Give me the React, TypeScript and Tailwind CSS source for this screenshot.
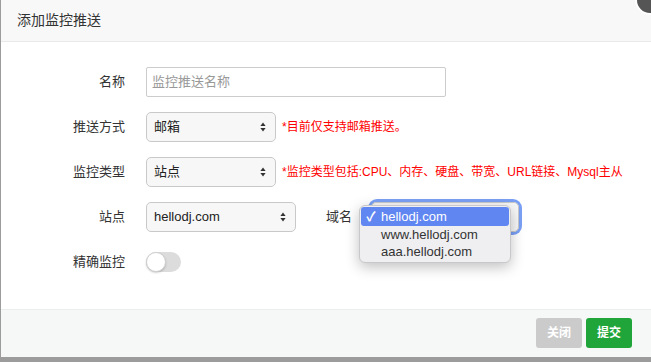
import React from "react";

const cjk = { fontFamily: '"Liberation Sans", "Noto Sans CJK SC", sans-serif' };

const Arrows = () => (
  <svg width="6" height="10" viewBox="0 0 6 10" className="shrink-0">
    <path d="M3 0.5 L5.6 4 H0.4 Z" fill="#333" />
    <path d="M3 9.5 L5.6 6 H0.4 Z" fill="#333" />
  </svg>
);

const Select = ({ value, width }: { value?: string; width: string }) => (
  <div
    className={`${width} h-[30px] flex items-center justify-between pl-[7px] pr-[9px] rounded-[5px] border border-[#c9c9c9] bg-[#f7f7f7] text-[13px] text-[#222]`}
  >
    <span>{value}</span>
    <Arrows />
  </div>
);

const Row = ({ label, children }: { label: string; children: React.ReactNode }) => (
  <div className="flex items-center h-[30px] mb-[15px]">
    <div className="w-[124px] text-right text-[13px] text-[#333]">{label}</div>
    <div className="ml-[21px] flex items-center">{children}</div>
  </div>
);

export default function App() {
  return (
    <div className="w-[651px] h-[362px] relative overflow-hidden bg-[#9c9c9c]" style={cjk}>
      <div className="absolute left-[1px] top-0 right-0 h-[357px] bg-white flex flex-col">
        {/* header */}
        <div className="h-[42px] shrink-0 bg-[#f8f8f8] border-b border-[#e9e9e9] flex items-center pl-[16px] text-[14px] text-[#333]">
          添加监控推送
        </div>

        {/* body */}
        <div className="flex-1 pt-[25px] whitespace-nowrap">
          <Row label="名称">
            <div className="w-[300px] h-[30px] border border-[#ccc] rounded-[2px] flex items-center pl-[5px] text-[13px] text-[#999]">
              监控推送名称
            </div>
          </Row>
          <Row label="推送方式">
            <Select value="邮箱" width="w-[130px]" />
            <span className="ml-[6px] text-[12px] text-[#f00]">*目前仅支持邮箱推送。</span>
          </Row>
          <Row label="监控类型">
            <Select value="站点" width="w-[130px]" />
            <span className="ml-[6px] text-[12px] text-[#f00]">
              *监控类型包括:CPU、内存、硬盘、带宽、URL链接、Mysql主从
            </span>
          </Row>
          <Row label="站点">
            <Select value="hellodj.com" width="w-[150px]" />
            <div className="w-[56px] text-right text-[13px] text-[#333]">域名</div>
            <div className="ml-[19px] relative">
              <div className="rounded-[6px] ring-[3px] ring-[#7aa0f5]">
                <Select width="w-[148px]" />
              </div>
              {/* open native option list */}
              <div className="absolute left-[-12px] top-[3px] w-[152px] rounded-[6px] bg-[#efeff1] border border-[#c8c8ca] shadow-[0_4px_14px_rgba(0,0,0,0.25)] py-[1px] text-[13px] text-[#333]">
                <div className="h-[19px] mx-[1px] rounded-[3px] bg-[#5f86f1] text-white flex items-center">
                  <span className="w-[20px] text-center text-[13px] font-bold">✓</span>
                  <span>hellodj.com</span>
                </div>
                <div className="h-[17px] flex items-center pl-[21px]">www.hellodj.com</div>
                <div className="h-[18px] flex items-center pl-[21px]">aaa.hellodj.com</div>
              </div>
            </div>
          </Row>
          <Row label="精确监控">
            <div className="w-[35px] h-[20px] rounded-full bg-[#dcdcdc] relative">
              <div className="absolute left-0 top-0 w-[20px] h-[20px] rounded-full bg-white border border-[#d0d0d0] shadow-[0_1px_2px_rgba(0,0,0,0.2)]" />
            </div>
          </Row>
        </div>

        {/* footer */}
        <div className="h-[48px] shrink-0 bg-[#f6f8f8] border-t border-[#ebeeee] flex items-start justify-end gap-[4px] pt-[8px] pr-[19px]">
          <button className="w-[46px] h-[30px] rounded-[3px] bg-[#cbcbcb] text-white text-[12px] font-bold">关闭</button>
          <button className="w-[46px] h-[30px] rounded-[3px] bg-[#20a53a] text-white text-[12px] font-bold">提交</button>
        </div>
      </div>

      {/* layer close button */}
      <div className="absolute left-[635px] top-[-15px] w-[30px] h-[30px] rounded-full bg-[#555] border-2 border-white" />
    </div>
  );
}
